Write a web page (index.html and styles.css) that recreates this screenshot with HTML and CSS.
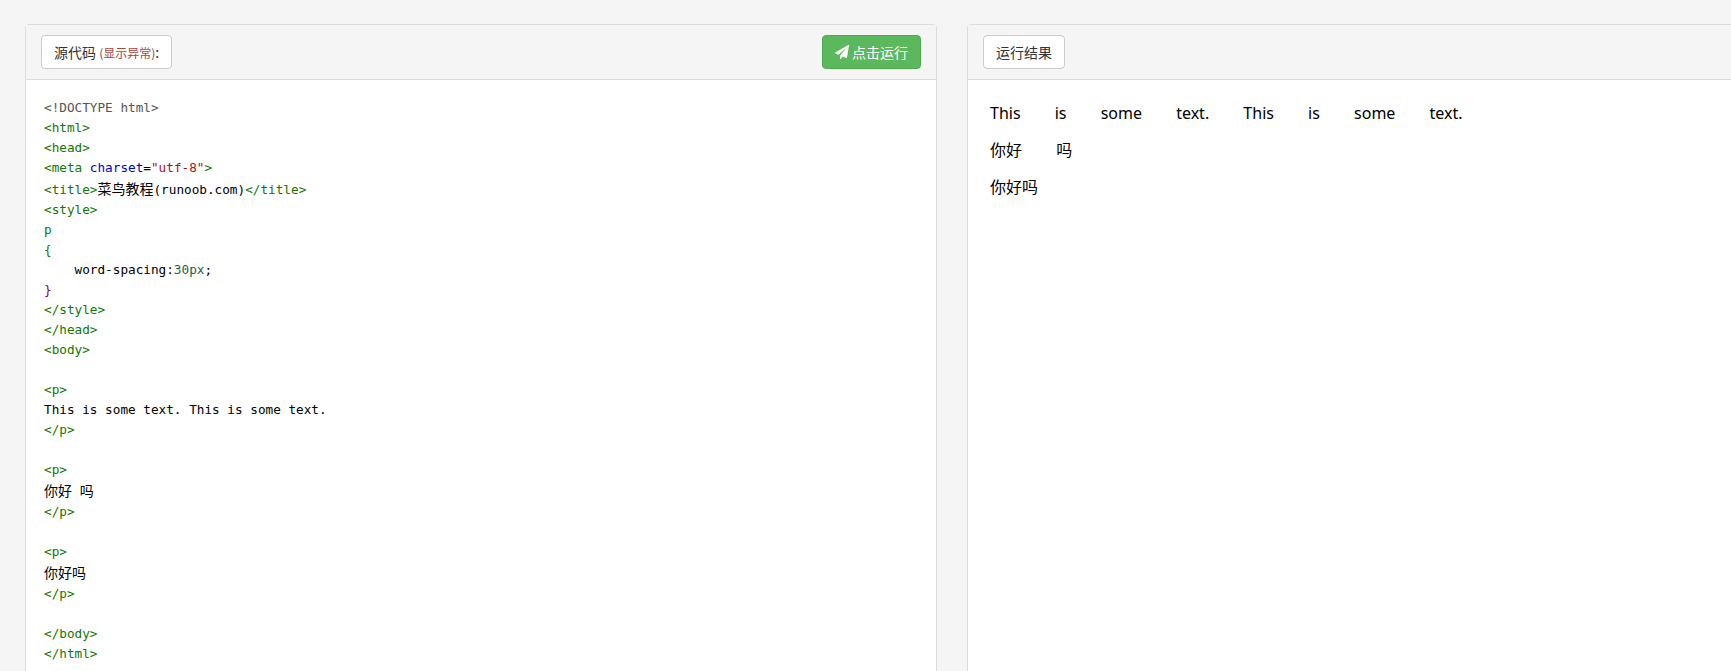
FILE: index.html
```html
<!DOCTYPE html>
<html lang="zh">
<head>
<meta charset="utf-8">
<title>菜鸟教程</title>
<link rel="stylesheet" href="styles.css">
</head>
<body>
<div class="row">
  <section class="panel">
    <header class="panel-head">
      <span class="btn">源代码 <small class="note">(<span class="danger">显示异常</span>)</small>:</span>
      <span class="btn btn-run"><svg class="plane" viewBox="0 0 1792 1792" aria-hidden="true"><path d="M1764 11q33 24 27 64l-256 1536q-5 29-32 45-14 8-31 8-11 0-24-5l-453-185-242 295q-18 23-49 23-13 0-22-4-19-7-30.5-23.5t-11.5-36.5v-349l864-1059-1069 925-395-162q-37-14-40-55-2-40 32-59l1664-960q15-9 32-9 20 0 36 11z"/></svg>点击运行</span>
    </header>
    <div class="panel-body code-body">
<pre class="code"><span class="meta">&lt;!DOCTYPE html&gt;</span>
<span class="tag">&lt;html&gt;</span>
<span class="tag">&lt;head&gt;</span>
<span class="tag">&lt;meta</span> <span class="attr">charset</span>=<span class="str">"utf-8"</span><span class="tag">&gt;</span>
<span class="tag">&lt;title&gt;</span><span class="cjk">菜鸟教程</span>(runoob.com)<span class="tag">&lt;/title&gt;</span>
<span class="tag">&lt;style&gt;</span>
<span class="tag">p</span>
<span class="tag">{</span>
    word-spacing:<span class="num">30px</span>;
<span class="brace">}</span>
<span class="tag">&lt;/style&gt;</span>
<span class="tag">&lt;/head&gt;</span>
<span class="tag">&lt;body&gt;</span>

<span class="tag">&lt;p&gt;</span>
This is some text. This is some text.
<span class="tag">&lt;/p&gt;</span>

<span class="tag">&lt;p&gt;</span>
<span class="cjk">你好</span> <span class="cjk">吗</span>
<span class="tag">&lt;/p&gt;</span>

<span class="tag">&lt;p&gt;</span>
<span class="cjk">你好吗</span>
<span class="tag">&lt;/p&gt;</span>

<span class="tag">&lt;/body&gt;</span>
<span class="tag">&lt;/html&gt;</span></pre>
    </div>
  </section>
  <section class="panel">
    <header class="panel-head">
      <span class="btn">运行结果</span>
    </header>
    <div class="panel-body result">
      <p>This is some text. This is some text.</p>
      <p>你好 吗</p>
      <p>你好吗</p>
    </div>
  </section>
</div>
</body>
</html>
```
FILE: styles.css
```css
* { box-sizing: border-box; }
html, body { height: 100%; }
body {
  margin: 0;
  background: #f5f5f5;
  overflow: hidden;
  font-family: "Noto Sans", "Noto Sans CJK SC", sans-serif;
  color: #333;
}
.row {
  display: flex;
  gap: 30px;
  padding: 24px 0 0 25px;
  height: 100%;
}
.panel {
  flex: none;
  width: 912px;
  height: 800px;
  background: #fff;
  border: 1px solid #ddd;
  border-radius: 4px;
  display: flex;
  flex-direction: column;
}
.panel-head {
  flex: none;
  height: 55px;
  padding: 10px 15px;
  background: #f5f5f5;
  border-bottom: 1px solid #ddd;
  display: flex;
  align-items: flex-start;
  justify-content: space-between;
}
.btn {
  display: inline-flex;
  align-items: center;
  height: 34px;
  padding: 0 12px;
  background: #fff;
  border: 1px solid #ccc;
  border-radius: 4px;
  font-family: "Noto Sans CJK SC", sans-serif;
  font-size: 14px;
  white-space: pre;
}
.note { font-size: 12px; color: #555; }
.danger { color: #a94442; }
.btn-run {
  background: #5cb85c;
  border-color: #4cae4c;
  color: #fff;
}
.plane {
  width: 14px;
  height: 14px;
  margin-right: 3px;
  fill: #fff;
}
.code-body { padding: 18px; }
.code {
  margin: 0;
  font-family: "DejaVu Sans Mono", monospace;
  font-size: 12.7px;
  line-height: 20px;
  color: #000;
}
.cjk {
  font-family: "Noto Sans CJK SC", sans-serif;
  font-size: 14px;
  line-height: 20px;
}
.meta { color: #555; }
.tag { color: #170; }
.attr { color: #00c; }
.str { color: #a11; }
.num { color: #164; }
.brace { color: #708; }
.result {
  padding: 23px 22px;
  font-family: "Noto Sans", "Noto Sans CJK SC", sans-serif;
  font-size: 16px;
  line-height: 21px;
  color: #000;
}
.result p {
  margin: 0 0 16px;
  word-spacing: 30px;
}
```
